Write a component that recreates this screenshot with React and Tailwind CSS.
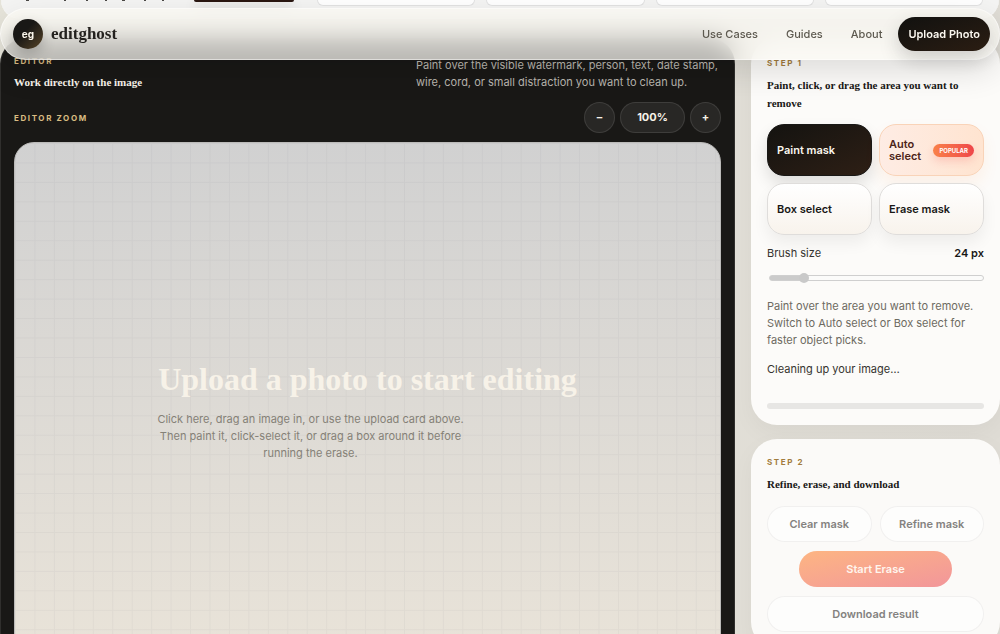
import React from "react";

const zoomButton =
  "flex h-[31px] items-center justify-center rounded-full border border-white/10 bg-[#282725] text-[11px] font-bold text-[#f7f2e8]";
const pillButton =
  "h-9 rounded-full border border-black/5 bg-white/60 text-[11px] font-semibold text-[#84827f]";
const toolButton =
  "flex h-[52px] items-center rounded-[17px] border px-[9px] text-left text-[11px] leading-3 font-semibold";
const plainTool =
  "border-[#dfdddb] bg-linear-to-b from-white to-[#f8f3ec] text-[#191816] shadow-[0_8px_16px_rgba(0,0,0,0.06)]";

function Header() {
  return (
    <header className="absolute inset-x-0 top-2 z-10 flex h-[52px] items-center justify-between rounded-[26px] border border-white/50 bg-[#faf8f2]/72 pr-[9px] pl-3 shadow-[0_12px_32px_rgba(0,0,0,0.12)] backdrop-blur-[12px]">
      <a href="#home" className="flex items-center gap-2">
        <span className="flex size-[30px] items-center justify-center rounded-full bg-linear-to-br from-[#191816] from-40% to-[#5a4526] text-[10px] font-bold text-[#faf5eb] shadow-[0_6px_14px_rgba(0,0,0,0.2)]">
          eg
        </span>
        <span className="font-['Liberation_Serif',serif] text-[17px] leading-5 font-bold text-[#24221f]">
          editghost
        </span>
      </a>
      <nav className="flex items-center gap-7 text-[11px] font-medium text-[#5d594f]">
        <a href="#use-cases">Use Cases</a>
        <a href="#guides">Guides</a>
        <a href="#about" className="-mr-3">About</a>
        <button
          type="button"
          className="h-[34px] rounded-full bg-linear-to-br from-[#11110f] to-[#2b1d12] px-[10px] font-semibold text-[#fcf8f0] shadow-[0_8px_20px_rgba(0,0,0,0.18)]"
        >
          Upload Photo
        </button>
      </nav>
    </header>
  );
}

function PreviousSection() {
  return (
    <section className="mx-px h-[19px] rounded-b-[24px] border-b border-white bg-[#f4f4f3] px-4">
      <div className="grid grid-cols-[166px_112px_repeat(4,1fr)] gap-x-[11px]">
        <svg viewBox="0 0 166 3" className="h-[3px] w-full" fill="#4b4946" aria-hidden="true">
          <path d="M9 0h3v1h-3zM47 0h2v1h-2zM69 0h2v1h-2zM88 0h2v1h-2zM105 0h3v1h-3zM127 0h2v1h-2zM145 0h2v1h-2z" />
        </svg>
        <div className="mr-3 h-[2px] rounded-b-lg bg-[#2a1712] shadow-[0_6px_12px_rgba(0,0,0,0.3)]" />
        <div className="h-[6px] rounded-b-[12px] border border-t-0 border-[#e2e2e2] bg-white" />
        <div className="h-[6px] rounded-b-[12px] border border-t-0 border-[#e2e2e2] bg-white" />
        <div className="h-[6px] rounded-b-[12px] border border-t-0 border-[#e2e2e2] bg-white" />
        <div className="h-[6px] rounded-b-[12px] border border-t-0 border-[#e2e2e2] bg-white" />
      </div>
    </section>
  );
}

function Label({ children, tone }) {
  return (
    <p className={`text-[8px] leading-3 font-bold tracking-[0.2em] uppercase ${tone}`}>{children}</p>
  );
}

function Heading({ children, tone }) {
  return (
    <h2 className={`font-['Liberation_Serif',serif] text-[11px] leading-[18px] font-bold ${tone}`}>
      {children}
    </h2>
  );
}

function Editor() {
  return (
    <section className="rounded-t-[26px] border border-white/10 bg-[#191816] px-[13px] pt-4">
      <div className="flex items-end justify-between">
        <div className="flex flex-col gap-[6px]">
          <Label tone="text-[#d9bc82]">Editor</Label>
          <Heading tone="text-[#f8f4eb]">Work directly on the image</Heading>
        </div>
        <p className="w-[305px] text-[11px] leading-[17px] text-[#b9b6af]">
          Paint over the visible watermark, person, text, date stamp, wire, cord, or small
          distraction you want to clean up.
        </p>
      </div>
      <div className="mt-[11px] flex items-center justify-between">
        <Label tone="text-[#d9bc82]">Editor zoom</Label>
        <div className="flex gap-[5px]">
          <button type="button" aria-label="Zoom out" className={`${zoomButton} w-[31px]`}>–</button>
          <button type="button" className={`${zoomButton} w-[65px]`}>100%</button>
          <button type="button" aria-label="Zoom in" className={`${zoomButton} w-[31px]`}>+</button>
        </div>
      </div>
      <div className="relative mt-[9px] flex min-h-[536px] items-center justify-center overflow-hidden rounded-t-[20px] border border-[#bcbbb9] bg-linear-to-b from-[#d1d1d1] to-[#eae4d9]">
        <svg className="absolute inset-0 size-full" aria-hidden="true">
          <defs>
            <pattern id="grid" width="19.45" height="19.45" patternUnits="userSpaceOnUse">
              <path d="M0 0.5H19.45M0.5 0V19.45" stroke="#4b5563" strokeOpacity="0.05" fill="none" />
            </pattern>
          </defs>
          <rect width="100%" height="100%" fill="url(#grid)" />
        </svg>
        <div className="relative w-[424px]">
          <h1 className="text-center font-['Liberation_Serif',serif] text-[32px] leading-10 font-bold text-[#f7f2e8]">
            Upload a photo to start editing
          </h1>
          <p className="mt-3 w-[310px] text-center text-[11px] leading-[17px] text-[#858177]">
            Click here, drag an image in, or use the upload card above. Then paint it, click-select
            it, or drag a box around it before running the erase.
          </p>
        </div>
      </div>
    </section>
  );
}

function StepOne() {
  return (
    <section className="rounded-[26px] bg-[#fcfbf9] px-4 pt-[19px] pb-4 shadow-[0_8px_24px_rgba(0,0,0,0.04)]">
      <Label tone="text-[#a17c3d]">Step 1</Label>
      <div className="mt-[7px]">
        <Heading tone="text-[#191816]">Paint, click, or drag the area you want to remove</Heading>
      </div>
      <div className="mt-3 grid grid-cols-2 gap-[7px]">
        <button
          type="button"
          className={`${toolButton} border-[#191816] bg-linear-to-br from-[#141310] to-[#2e1f15] text-[#fbf7ef] shadow-[0_8px_16px_rgba(0,0,0,0.12)]`}
        >
          Paint mask
        </button>
        <button
          type="button"
          className={`${toolButton} justify-between border-[#f9d3b8] bg-linear-to-r from-[#feece4] to-[#ffe4d0] text-[#4d2418] shadow-[0_8px_16px_rgba(249,115,22,0.08)]`}
        >
          <span className="flex flex-col">
            <span>Auto</span>
            <span>select</span>
          </span>
          <span className="rounded-full bg-linear-to-r from-[#f98049] to-[#ee4549] px-[6px] py-[3px] text-[6px] leading-[7px] font-bold text-white shadow-[0_4px_8px_rgba(239,68,68,0.2)]">
            POPULAR
          </span>
        </button>
        <button type="button" className={`${toolButton} ${plainTool}`}>Box select</button>
        <button type="button" className={`${toolButton} ${plainTool}`}>Erase mask</button>
      </div>
      <div className="mt-[10px] flex items-center justify-between text-[11px] leading-[17px] text-[#35332f]">
        <label htmlFor="brush">Brush size</label>
        <output htmlFor="brush" className="font-semibold text-[#191816]">24 px</output>
      </div>
      <input
        id="brush"
        type="range"
        min="8"
        max="120"
        defaultValue="24"
        disabled
        className="mt-[10px] ml-[2px] block h-3 w-[calc(100%-2px)] appearance-none bg-transparent [&::-webkit-slider-runnable-track]:h-[6px] [&::-webkit-slider-runnable-track]:rounded-full [&::-webkit-slider-runnable-track]:border [&::-webkit-slider-runnable-track]:border-[#cfcfcf] [&::-webkit-slider-runnable-track]:bg-[linear-gradient(to_right,#cbcbcb_16%,#fbfbfa_16%)] [&::-webkit-slider-thumb]:-mt-[3px] [&::-webkit-slider-thumb]:size-[10px] [&::-webkit-slider-thumb]:appearance-none [&::-webkit-slider-thumb]:rounded-full [&::-webkit-slider-thumb]:bg-[#c9c9c9]"
      />
      <p className="mt-[14px] text-[11px] leading-[17px] text-[#6d6a61]">
        Paint over the area you want to remove. Switch to Auto select or Box select for faster
        object picks.
      </p>
      <p className="mt-3 text-[11px] leading-[17px] text-[#35332f]">Cleaning up your image…</p>
      <div role="progressbar" aria-label="Cleanup progress" className="mt-[25px] h-[6px] rounded-full bg-[#e7e6e4]" />
    </section>
  );
}

function StepTwo() {
  return (
    <section className="rounded-[26px] bg-[#fbfaf8] px-4 pt-[17px] pb-4 shadow-[0_8px_24px_rgba(0,0,0,0.04)]">
      <Label tone="text-[#a17c3d]">Step 2</Label>
      <div className="mt-[7px]">
        <Heading tone="text-[#191816]">Refine, erase, and download</Heading>
      </div>
      <div className="mt-[13px] grid grid-cols-2 gap-x-2 gap-y-[9px]">
        <button type="button" disabled className={pillButton}>Clear mask</button>
        <button type="button" disabled className={pillButton}>Refine mask</button>
        <button
          type="button"
          disabled
          className="col-span-2 h-9 w-[153px] justify-self-center rounded-full bg-linear-to-br from-[#fdb582] to-[#f2969a] text-[11px] font-semibold text-[#fff6ee]"
        >
          Start Erase
        </button>
        <button type="button" disabled className={`${pillButton} col-span-2`}>Download result</button>
      </div>
    </section>
  );
}

export default function App() {
  return (
    <div className="relative h-screen overflow-hidden bg-linear-to-r from-[#e6e4da] to-[#dfdcd5] font-['Inter',sans-serif]">
      <Header />
      <PreviousSection />
      <main className="mt-[19px] grid grid-cols-[1fr_249px] gap-4">
        <Editor />
        <div className="flex flex-col gap-[14px]">
          <StepOne />
          <StepTwo />
        </div>
      </main>
    </div>
  );
}
